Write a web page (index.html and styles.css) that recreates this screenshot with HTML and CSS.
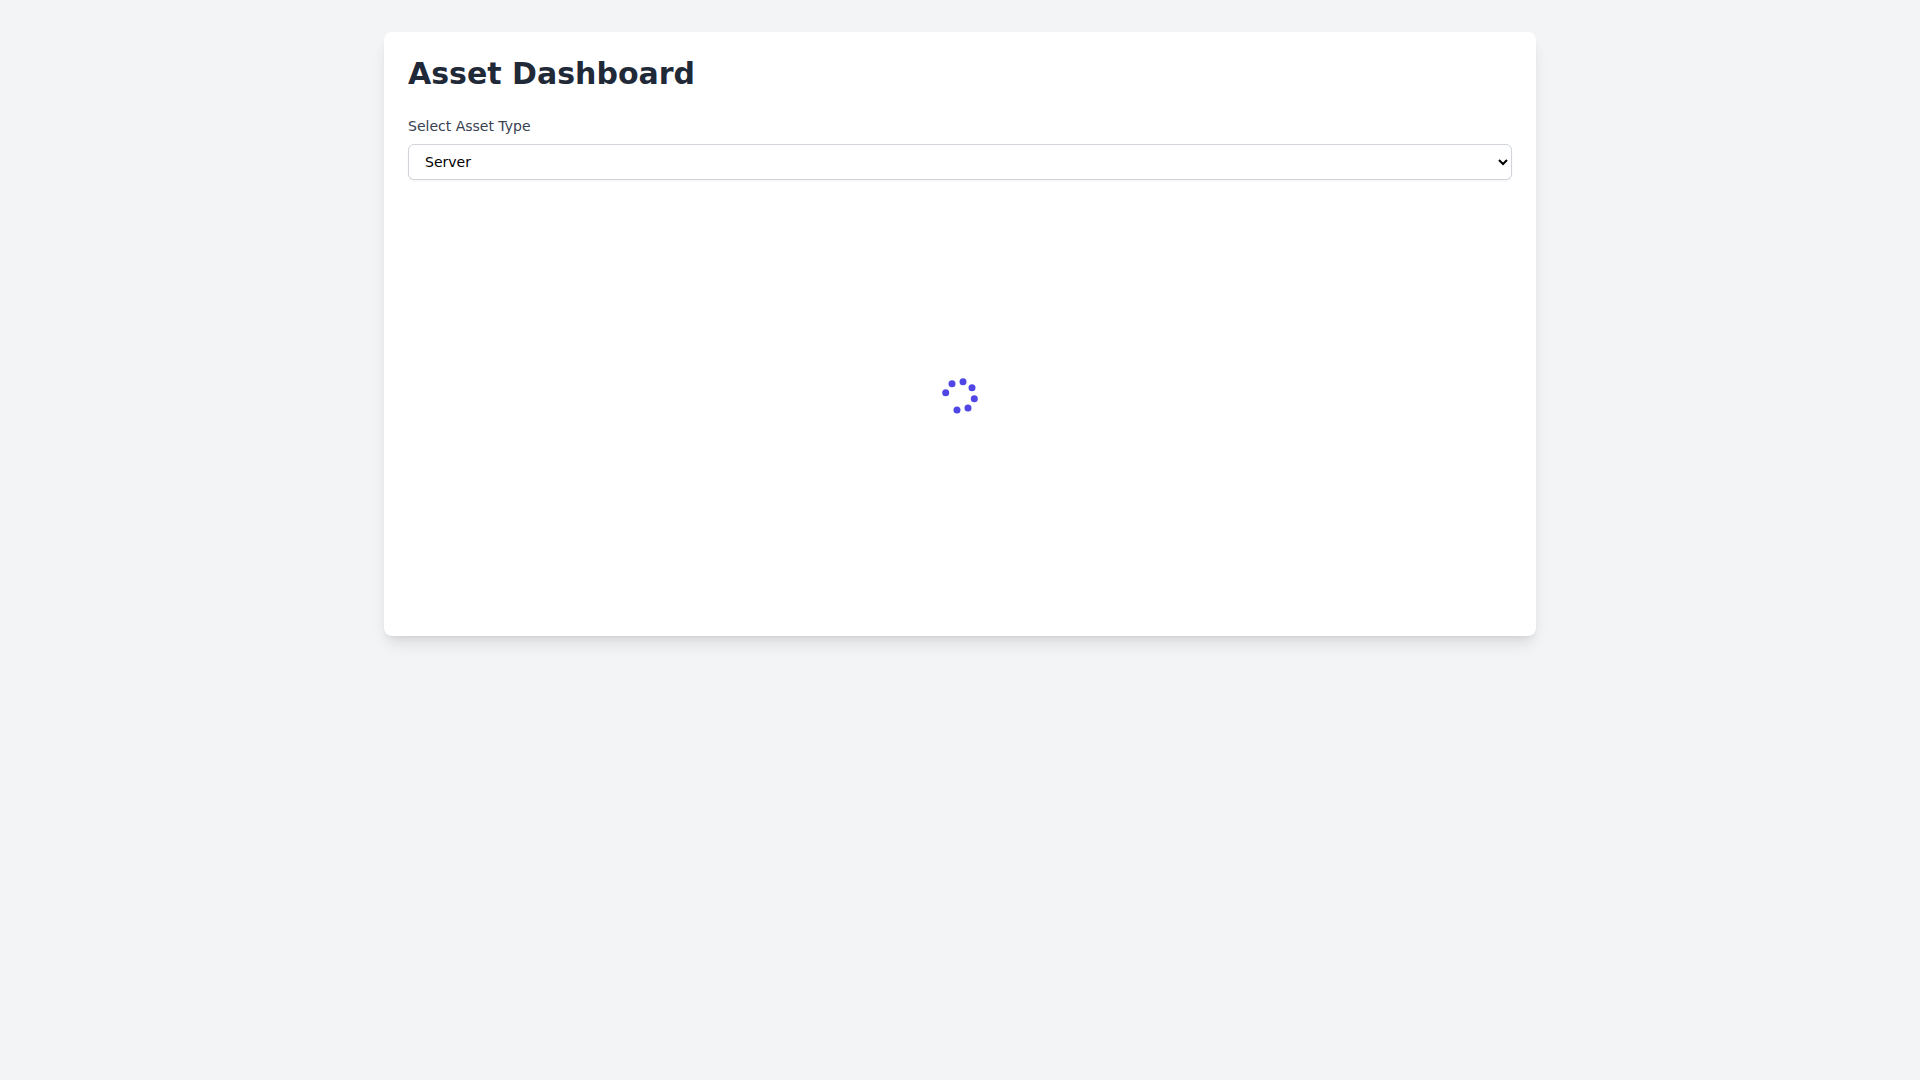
FILE: index.html
```html
<!DOCTYPE html>
<html lang="en">
<head>
<meta charset="utf-8">
<title>Asset Dashboard</title>
<link rel="stylesheet" href="styles.css">
</head>
<body>
<main class="card">
  <h1 class="title">Asset Dashboard</h1>
  <label class="label" for="asset-type">Select Asset Type</label>
  <select class="select" id="asset-type">
    <option>Server</option>
    <option>Laptop</option>
    <option>Network</option>
  </select>
  <div class="loading">
    <svg class="spinner" width="48" height="48" viewBox="0 0 48 48" aria-hidden="true">
      <circle cx="16" cy="11.7" r="3.5"/>
      <circle cx="27" cy="9.7" r="3.5"/>
      <circle cx="36" cy="15.7" r="3.5"/>
      <circle cx="38.3" cy="26.7" r="3.5"/>
      <circle cx="32" cy="36" r="3.5"/>
      <circle cx="21" cy="38" r="3.5"/>
      <circle cx="9.7" cy="20.7" r="3.5"/>
    </svg>
  </div>
</main>
</body>
</html>
```
FILE: styles.css
```css
* { box-sizing: border-box; }
html, body { margin: 0; height: 100%; }
body {
  background: #f3f4f6;
  padding-top: 32px;
  font-family: "DejaVu Sans", sans-serif;
}
.card {
  width: 1152px;
  margin: 0 auto;
  padding: 24px;
  background: #fff;
  border-radius: 8px;
  box-shadow: 0 10px 15px -3px rgba(0,0,0,.1), 0 4px 6px -4px rgba(0,0,0,.1);
}
.title {
  margin: 0 0 24px;
  font-size: 30px;
  line-height: 36px;
  font-weight: 700;
  color: #1f2937;
}
.label {
  display: block;
  margin-bottom: 8px;
  font-size: 14px;
  line-height: 20px;
  color: #374151;
}
.select {
  display: block;
  width: 100%;
  height: 36px;
  padding: 8px 12px;
  font: 14px/20px "DejaVu Sans", sans-serif;
  color: #000;
  background: #fff;
  border: 1px solid #d1d5db;
  border-radius: 6px;
  box-shadow: 0 1px 2px rgba(0,0,0,.05);
}
.loading {
  display: flex;
  align-items: center;
  justify-content: center;
  height: 384px;
  margin: 24px 0;
}
.spinner { display: block; }
.spinner circle { fill: #4f46e5; }
```
